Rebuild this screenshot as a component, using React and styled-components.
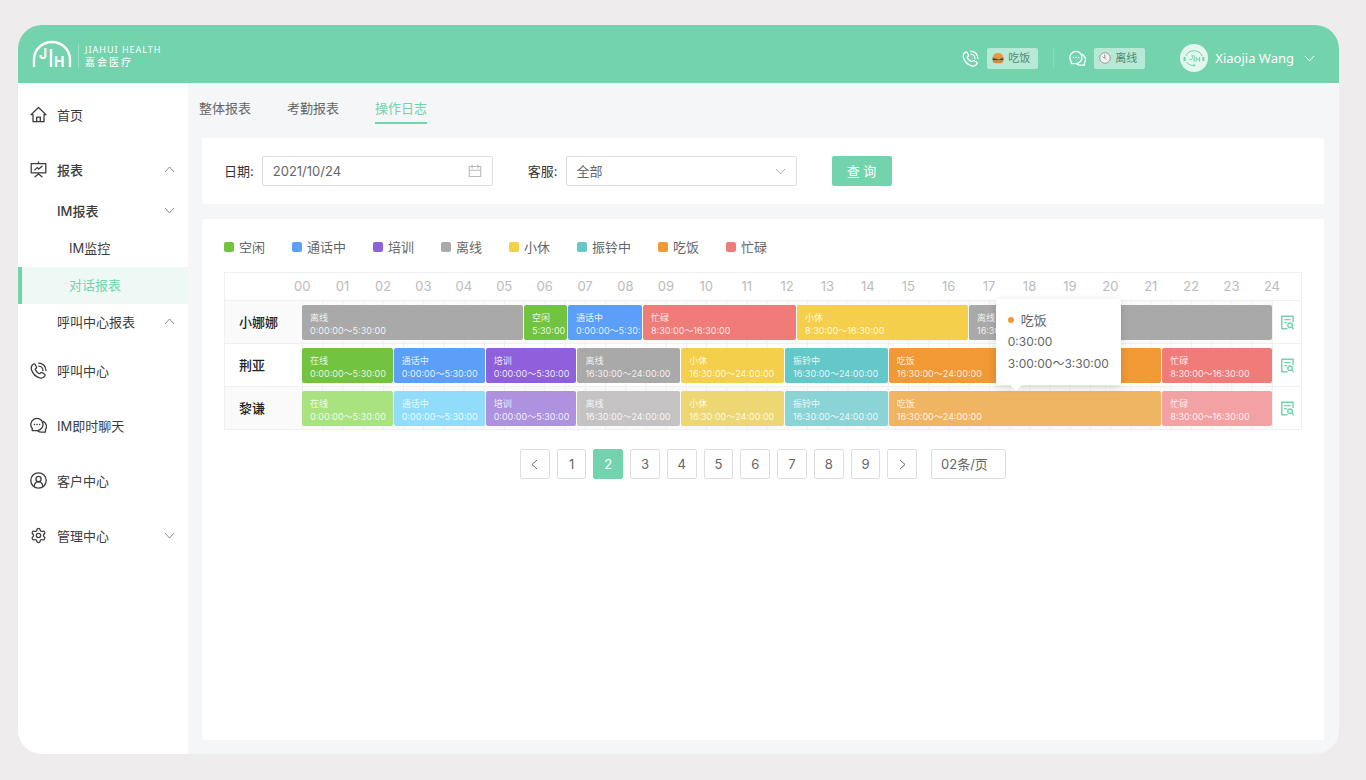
import React, { useState } from 'react'
import styled, { createGlobalStyle } from 'styled-components'
import { Settings } from 'lucide-react'

const GlobalStyle = createGlobalStyle`
    * {
        box-sizing: border-box;
    }
    body {
        margin: 0;
        background: #efeced;
        color: #444;
        font-family: Inter, "Noto Sans CJK SC", sans-serif;
        font-size: 13px;
        line-height: 20px;
    }
    button, input, select {
        font: inherit;
        color: inherit;
    }
    ul {
        list-style: none;
        margin: 0;
        padding: 0;
    }
    a {
        color: inherit;
        text-decoration: none;
    }
`

const COLORS = {
    green: '#72c33f',
    blue: '#5b9ff8',
    purple: '#8f60dc',
    gray: '#a9a9a9',
    yellow: '#f3cf4b',
    teal: '#64c8c9',
    orange: '#f09935',
    red: '#ef7c79',
    greenLight: '#a9e380',
    blueLight: '#90dcfa',
    purpleLight: '#ae92e0',
    grayLight: '#c4c2c3',
    yellowLight: '#edd772',
    tealLight: '#8ad4d5',
    orangeLight: '#f0b562',
    redLight: '#f2a2a2'
}

const Shell = styled.div`
    display: flex;
    flex-direction: column;
    min-height: calc(100vh - 51px);
    margin: 25px 27px 26px 18px;
    border-radius: 24px;
    overflow: hidden;
    background: #f4f6f8;
`

const Header = styled.header`
    display: flex;
    align-items: center;
    height: 58px;
    padding: 8px 24px 0 14px;
    background: #72d3ad;
    color: #fff;
`

const Brand = styled.a`
    display: flex;
    align-items: center;
    margin-right: auto;
    padding-bottom: 4px;
`

const BrandText = styled.span`
    display: flex;
    flex-direction: column;
    margin-left: 6px;
    padding-left: 6px;
    border-left: 1px solid #98dfc4;
    font-family: "Noto Sans", "Noto Sans CJK SC", sans-serif;
    font-size: 9px;
    line-height: 12px;
    letter-spacing: 1px;
`

const BrandChinese = styled.span`
    font-size: 10px;
    letter-spacing: 2px;
`

const Channel = styled.div`
    display: flex;
    align-items: center;
    gap: 8px;
    padding: 0 15px;
    & + & {
        border-left: 1px solid #88dab9;
    }
`

const StatusTag = styled.button`
    display: flex;
    align-items: center;
    gap: 4px;
    height: 21px;
    padding: 0 8px 0 5px;
    border: none;
    border-radius: 2px;
    background: #b8e9d6;
    color: #4f8973;
    font-size: 11px;
    cursor: pointer;
`

const UserMenu = styled.button`
    display: flex;
    align-items: center;
    gap: 7px;
    margin-left: 20px;
    padding: 0;
    border: none;
    background: none;
    color: #fff;
    font-family: "Noto Sans", sans-serif;
    cursor: pointer;
    & > svg:last-child {
        margin-left: 3px;
    }
`

const Body = styled.div`
    display: flex;
    flex: 1;
`

const Sidebar = styled.nav`
    flex: 0 0 170px;
    padding-top: 8px;
    background: #fff;
`

const MenuGroup = styled.li`
    margin-bottom: ${props => (props.$open ? 6 : 8)}px;
`

const MenuLink = styled.a`
    display: flex;
    align-items: center;
    gap: 10px;
    height: 47px;
    padding: 0 13px 0 12px;
    color: #3c3c3c;
    font-weight: ${props => (props.$strong ? 500 : 400)};
`

const SubLink = styled.a`
    display: flex;
    align-items: center;
    height: 37px;
    padding: 0 13px 2px ${props => (props.$deep ? 47 : 35)}px;
    border-left: 4px solid ${props => (props.$active ? '#72d3ad' : 'transparent')};
    background: ${props => (props.$active ? '#eef8f5' : 'none')};
    color: ${props => (props.$active ? '#72d3ad' : '#3c3c3c')};
    font-weight: ${props => (props.$strong ? 500 : 400)};
`

const MenuText = styled.span`
    flex: 1;
`

const Main = styled.main`
    display: flex;
    flex-direction: column;
    flex: 1;
    min-width: 0;
    padding: 0 15px 14px 14px;
`

const Tabs = styled.div`
    display: flex;
    gap: 36px;
    height: 55px;
    padding-top: 12px;
    margin-left: -3px;
`

const Tab = styled.button`
    height: 29px;
    padding: 0 0 2px;
    border: none;
    border-bottom: 2px solid ${props => (props.$active ? '#72d3ad' : 'transparent')};
    background: none;
    color: ${props => (props.$active ? '#72d3ad' : '#666')};
    cursor: pointer;
`

const Card = styled.section`
    padding: 18px 22px;
    border-radius: 2px;
    background: #fff;
`

const LogCard = styled(Card)`
    flex: 1;
    margin-top: 15px;
`

const Filters = styled.form`
    display: flex;
    align-items: center;
    gap: 35px;
`

const FormItem = styled.div`
    display: flex;
    align-items: center;
    gap: 8px;
    & > label {
        color: #333;
    }
`

const Control = styled.div`
    display: flex;
    align-items: center;
    width: 231px;
    height: 30px;
    padding: 0 10px;
    border: 1px solid #dedede;
    border-radius: 2px;
    color: #666;
    input, select {
        flex: 1;
        min-width: 0;
        padding: 0;
        border: none;
        outline: none;
        appearance: none;
        background: none;
    }
`

const SearchButton = styled.button`
    width: 60px;
    height: 30px;
    padding: 0;
    border: none;
    border-radius: 2px;
    background: #72d3ad;
    color: #fff;
    cursor: pointer;
`

const Legend = styled.ul`
    display: flex;
    gap: 27px;
    color: #666;
`

const LegendItem = styled.li`
    display: flex;
    align-items: center;
    gap: 5px;
    &::before {
        content: '';
        width: 10px;
        height: 10px;
        border-radius: 2px;
        background: ${props => props.$color};
    }
`

const LogTable = styled.table`
    width: 100%;
    margin-top: 15px;
    table-layout: fixed;
    border-collapse: separate;
    border-spacing: 0;
    border: 1px solid #f0f0f0;
    th, td {
        padding: 0;
    }
    tbody th, tbody td {
        height: 43px;
        border-top: 1px solid #f0f0f0;
    }
    tbody th {
        padding-left: 14px;
        color: #222;
        font-weight: 500;
        text-align: left;
    }
    tbody tr:nth-child(odd) th, tbody tr:nth-child(odd) td {
        background-color: #fafafa;
    }
    tbody tr td:last-child {
        border-left: 1px solid #f0f0f0;
        background: #fff !important;
    }
`

const NameHead = styled.th`
    width: 77px;
`

const ActionHead = styled.th`
    width: 29px;
`

const Hours = styled.div`
    display: flex;
    height: 27px;
    margin: 0 -20px;
    color: #bbb;
    font-weight: 400;
    line-height: 27px;
    span {
        flex: 1;
        text-align: center;
    }
`

const TrackCell = styled.td`
    background-image: linear-gradient(to right, #efefef 1px, transparent 1px);
    background-size: calc(100% / 48) 100%;
`

const Track = styled.div`
    display: flex;
    gap: 1px;
    height: 35px;
`

const Segment = styled.div`
    position: relative;
    flex: ${props => props.$size} 1 0;
    min-width: 0;
    padding-top: 6px;
    border-radius: 2px;
    background: ${props => props.$color};
    color: #ffffffdd;
    font-size: 9px;
    line-height: 13px;
`

const SegmentLine = styled.span`
    display: block;
    margin-left: 8px;
    overflow: hidden;
    white-space: nowrap;
`

const Tooltip = styled.div`
    position: absolute;
    z-index: 2;
    bottom: calc(100% + 6px);
    left: 107px;
    padding: 10px 12px;
    border-radius: 2px;
    background: #fff;
    box-shadow: 0 2px 8px #00000026;
    color: #666;
    font-size: 12px;
    line-height: 22px;
    white-space: nowrap;
    &::after {
        content: '';
        position: absolute;
        top: 100%;
        left: 14px;
        border: 6px solid transparent;
        border-top-color: #fff;
        border-bottom: none;
    }
`

const TooltipTitle = styled.div`
    display: flex;
    align-items: center;
    gap: 7px;
    font-size: 13px;
    &::before {
        content: '';
        width: 6px;
        height: 6px;
        border-radius: 50%;
        background: #f09935;
    }
`

const DetailButton = styled.button`
    display: flex;
    align-items: center;
    justify-content: center;
    width: 100%;
    padding: 0;
    border: none;
    background: none;
    color: #72d3ad;
    cursor: pointer;
`

const Pager = styled.nav`
    display: flex;
    justify-content: center;
    gap: 14px;
    margin-top: 19px;
    color: #666;
`

const Pages = styled.div`
    display: flex;
    gap: 7px;
    width: 397px;
`

const PageButton = styled.button`
    display: flex;
    align-items: center;
    justify-content: center;
    flex: 1;
    height: 30px;
    padding: 0;
    border: 1px solid ${props => (props.$active ? '#72d3ad' : '#dedede')};
    border-radius: 2px;
    background: ${props => (props.$active ? '#72d3ad' : '#fff')};
    color: ${props => (props.$active ? '#fff' : '#666')};
    cursor: pointer;
`

const PageSize = styled.select`
    width: 75px;
    height: 30px;
    padding: 0 9px;
    border: 1px solid #dedede;
    border-radius: 2px;
    background: #fff;
    appearance: none;
`

const Icon = ({ size = 17, children, ...rest }) => (
    <svg width={size} height={size} viewBox="0 0 17 17" fill="none" stroke="currentColor"
        strokeWidth="1.3" strokeLinecap="round" strokeLinejoin="round" aria-hidden="true" {...rest}>
        {children}
    </svg>
)

const HomeIcon = () => (
    <Icon>
        <path d="M1 8.6 8.5 1.5 16 8.6H14V15.7H3V8.6Z" />
        <path d="M6.7 15.5V11.2H10.3V15.5" />
    </Icon>
)

const BoardIcon = () => (
    <Icon>
        <path d="M8.5 .8V2.6M1.2 2.6H15.8V11.8H1.2ZM8.5 11.8V13M8.5 13 5 15.8M8.5 13 12 15.8" />
        <path d="M4.8 8.9 7.2 6.6 8.8 8 12 5.2" />
    </Icon>
)

const PhoneIcon = () => (
    <Icon>
        <path d="M3.2 2.2C1.2 3.6.8 5.6 1.6 8 2.8 11.6 6 14.8 9.6 15.9 12 16.5 13.8 15.8 14.8 14 15.3 13.2 15 12.5 14.3 12L12.4 10.8C11.6 10.3 10.9 10.5 10.3 11.2 9.8 11.8 9.2 11.8 8.5 11.3 7.2 10.4 6.2 9.3 5.5 8.2 5.1 7.5 5.2 7 5.8 6.5 6.6 6 6.7 5.2 6.3 4.5L5.2 2.7C4.7 1.9 4 1.7 3.2 2.2Z" />
        <path d="M8.6 1.1A7.3 7.3 0 0 1 15.9 8.6M8.8 4.1A4.3 4.3 0 0 1 12.9 8.4" />
    </Icon>
)

const ChatIcon = () => (
    <Icon>
        <path d="M2.2 13.6V11.4A6.1 6.1 0 1 1 7 13.6Z" />
        <path d="M13 4.4A5.4 5.4 0 0 1 15.4 12.7V15.2H11.3A5.5 5.5 0 0 1 7.8 14" />
        <path d="M4.4 7.6H4.5M7 7.6H7.1M9.6 7.6H9.7" strokeWidth="1.5" />
    </Icon>
)

const UserIcon = () => (
    <Icon>
        <circle cx="8.5" cy="8.5" r="7.7" />
        <circle cx="8.5" cy="7" r="2.6" />
        <path d="M4.2 14.6C4.4 11.4 6 9.9 8.5 9.9S12.6 11.4 12.8 14.6" />
    </Icon>
)

const CalendarIcon = () => (
    <Icon size={14} stroke="#bbb" strokeLinejoin="miter">
        <path d="M1.5 3H15.5V15.2H1.5ZM1.5 7.5H15.5M5 1V5M12 1V5" />
    </Icon>
)

const DetailIcon = () => (
    <Icon size={15} strokeLinecap="butt" strokeWidth="1.6">
        <path d="M14.8 8V1.5H2V15.6H8.5M4.8 5.2H12M4.8 8.6H8" />
        <circle cx="11.4" cy="11.6" r="2.6" />
        <path d="M13.2 13.5 15.6 16" />
    </Icon>
)

const Arrow = ({ dir, size = 11, color = 'currentColor' }) => {
    const shapes = {
        up: '1,8 5.5,3 10,8',
        down: '1,3 5.5,8 10,3',
        left: '8,1 3,5.5 8,10',
        right: '3,1 8,5.5 3,10'
    }
    return (
        <svg width={size} height={size} viewBox="0 0 11 11" fill="none" stroke={color} aria-hidden="true">
            <polyline points={shapes[dir]} />
        </svg>
    )
}

const Logo = () => (
    <svg width="40" height="32" viewBox="0 0 40 32" fill="none" stroke="#fff" strokeWidth="2.4" aria-hidden="true">
        <path d="M2 27V19.5A18 17.5 0 0 1 38 19.5V27" />
        <path d="M19 9V27" />
        <text x="7" y="19" fill="#fff" stroke="none" fontFamily="Inter" fontSize="14" fontWeight="700">J</text>
        <text x="22" y="27" fill="#fff" stroke="none" fontFamily="Inter" fontSize="14" fontWeight="700">H</text>
    </svg>
)

const Burger = () => (
    <svg width="12" height="12" viewBox="0 0 12 12" aria-hidden="true">
        <path d="M.8 5.2C.8 2.4 3 .9 6 .9S11.2 2.4 11.2 5.2Z" fill="#e89a3c" />
        <path d="M.4 5.3H11.6V6.5H.4Z" fill="#79a83a" />
        <path d="M.6 6.3H11.4V8.4H.6Z" fill="#6d3524" />
        <path d="M2 6.2H9.5L7 7.4Z" fill="#f5c63c" />
        <path d="M.9 8.4H11.1V9.3C11.1 10.6 10.2 11.2 9 11.2H3C1.8 11.2.9 10.6.9 9.3Z" fill="#dd8a35" />
    </svg>
)

const Clock = () => (
    <svg width="12" height="12" viewBox="0 0 12 12" fill="none" aria-hidden="true">
        <circle cx="6" cy="6" r="5.3" fill="#f6f4f4" stroke="#a09a9c" />
        <path d="M6 6.3 5.6 2.4M6 6.3 3.6 4.8" stroke="#777" strokeWidth=".8" />
        <path d="M6 6.3 8 8.4" stroke="#e0785c" strokeWidth=".5" />
    </svg>
)

const Avatar = () => (
    <svg width="28" height="28" viewBox="0 0 28 28" fill="none" aria-hidden="true">
        <circle cx="14" cy="14" r="14" fill="#e3f7ef" />
        <g stroke="#72d3ad">
            <path d="M6 12C7.2 8.6 10.2 6.7 14 6.7S20.8 8.6 22 12M6.5 18C8 20.2 10 21.2 13 21.4" />
            <path d="M4.6 13V17M23.4 13V17" strokeWidth="2" />
            <path d="M12.3 11V14.6Q11.6 16 9.4 15.4M14.2 11V17.6M16.2 13V17.6M16.2 15.2H19.6M19.6 13V17.6" />
            <path d="M13 21.4H15.2" strokeWidth="1.6" />
        </g>
    </svg>
)

const legend = [
    ['空闲', 'green'], ['通话中', 'blue'], ['培训', 'purple'], ['离线', 'gray'],
    ['小休', 'yellow'], ['振铃中', 'teal'], ['吃饭', 'orange'], ['忙碌', 'red']
]

const early = '0:00:00～5:30:00'
const day = '8:30:00～16:30:00'
const late = '16:30:00～24:00:00'

// [status, time, width share, colour]
const shifts = [
    ['在线', early, 91, 'green'], ['通话中', early, 91, 'blue'], ['培训', early, 91, 'purple'],
    ['离线', late, 103, 'gray'], ['小休', late, 103, 'yellow'], ['振铃中', late, 103, 'teal'],
    ['吃饭', late, 273, 'orange'], ['忙碌', day, 110, 'red']
]

const agents = [
    {
        name: '小娜娜',
        segments: [
            ['离线', early, 221, 'gray'], ['空闲', '5:30:00', 43, 'green'],
            ['通话中', '0:00:00～5:30:', 74, 'blue'], ['忙碌', day, 153, 'red'],
            ['小休', day, 171, 'yellow'], ['离线', late, 303, 'gray']
        ]
    },
    { name: '荆亚', segments: shifts },
    { name: '黎谦', segments: shifts.map(([a, b, c, color]) => [a, b, c, color + 'Light']), tip: 6 }
]

const hours = Array.from({ length: 25 }, (_, i) => String(i).padStart(2, '0'))
const tabs = ['整体报表', '考勤报表', '操作日志']

function Row({ agent }) {
    return (
        <tr>
            <th scope="row">{agent.name}</th>
            <TrackCell>
                <Track>
                    {agent.segments.map(([label, time, size, color], i) => (
                        <Segment key={i} $size={size} $color={COLORS[color]}>
                            <SegmentLine>{label}</SegmentLine>
                            <SegmentLine>{time}</SegmentLine>
                            {agent.tip === i && (
                                <Tooltip role="tooltip">
                                    <TooltipTitle>吃饭</TooltipTitle>
                                    <div>0:30:00</div>
                                    <div>3:00:00～3:30:00</div>
                                </Tooltip>
                            )}
                        </Segment>
                    ))}
                </Track>
            </TrackCell>
            <td><DetailButton type="button" aria-label="详情"><DetailIcon /></DetailButton></td>
        </tr>
    )
}

function App() {
    const [tab, setTab] = useState('操作日志')
    const [page, setPage] = useState(2)
    const [date, setDate] = useState('2021/10/24')

    return (
        <>
            <GlobalStyle />
            <Shell>
                <Header>
                    <Brand href="#">
                        <Logo />
                        <BrandText>
                            <span>JIAHUI HEALTH</span>
                            <BrandChinese>嘉会医疗</BrandChinese>
                        </BrandText>
                    </Brand>
                    <Channel>
                        <PhoneIcon />
                        <StatusTag type="button"><Burger />吃饭</StatusTag>
                    </Channel>
                    <Channel>
                        <ChatIcon />
                        <StatusTag type="button"><Clock />离线</StatusTag>
                    </Channel>
                    <UserMenu type="button">
                        <Avatar />
                        Xiaojia Wang
                        <Arrow dir="down" />
                    </UserMenu>
                </Header>
                <Body>
                    <Sidebar>
                        <ul>
                            <MenuGroup>
                                <MenuLink href="#"><HomeIcon /><MenuText>首页</MenuText></MenuLink>
                            </MenuGroup>
                            <MenuGroup $open>
                                <MenuLink href="#" $strong>
                                    <BoardIcon /><MenuText>报表</MenuText><Arrow dir="up" color="#888" />
                                </MenuLink>
                                <ul>
                                    <li><SubLink href="#" $strong><MenuText>IM报表</MenuText><Arrow dir="down" color="#888" /></SubLink></li>
                                    <li><SubLink href="#" $deep>IM监控</SubLink></li>
                                    <li><SubLink href="#" $deep $active>对话报表</SubLink></li>
                                    <li><SubLink href="#"><MenuText>呼叫中心报表</MenuText><Arrow dir="up" color="#888" /></SubLink></li>
                                </ul>
                            </MenuGroup>
                            <MenuGroup>
                                <MenuLink href="#"><PhoneIcon /><MenuText>呼叫中心</MenuText></MenuLink>
                            </MenuGroup>
                            <MenuGroup>
                                <MenuLink href="#"><ChatIcon /><MenuText>IM即时聊天</MenuText></MenuLink>
                            </MenuGroup>
                            <MenuGroup>
                                <MenuLink href="#"><UserIcon /><MenuText>客户中心</MenuText></MenuLink>
                            </MenuGroup>
                            <MenuGroup>
                                <MenuLink href="#">
                                    <Settings size={17} strokeWidth={1.8} /><MenuText>管理中心</MenuText><Arrow dir="down" color="#888" />
                                </MenuLink>
                            </MenuGroup>
                        </ul>
                    </Sidebar>
                    <Main>
                        <Tabs>
                            {tabs.map(t => (
                                <Tab key={t} type="button" $active={t === tab} onClick={() => setTab(t)}>{t}</Tab>
                            ))}
                        </Tabs>
                        <Card>
                            <Filters onSubmit={e => e.preventDefault()}>
                                <FormItem>
                                    <label htmlFor="date">日期:</label>
                                    <Control>
                                        <input id="date" value={date} onChange={e => setDate(e.target.value)} />
                                        <CalendarIcon />
                                    </Control>
                                </FormItem>
                                <FormItem>
                                    <label htmlFor="agent">客服:</label>
                                    <Control>
                                        <select id="agent"><option>全部</option></select>
                                        <Arrow dir="down" color="#aaa" />
                                    </Control>
                                </FormItem>
                                <SearchButton type="submit">查 询</SearchButton>
                            </Filters>
                        </Card>
                        <LogCard>
                            <Legend>
                                {legend.map(([label, color]) => (
                                    <LegendItem key={label} $color={COLORS[color]}>{label}</LegendItem>
                                ))}
                            </Legend>
                            <LogTable>
                                <thead>
                                    <tr>
                                        <NameHead />
                                        <th><Hours>{hours.map(h => <span key={h}>{h}</span>)}</Hours></th>
                                        <ActionHead />
                                    </tr>
                                </thead>
                                <tbody>
                                    {agents.map(agent => <Row key={agent.name} agent={agent} />)}
                                </tbody>
                            </LogTable>
                            <Pager>
                                <Pages>
                                    <PageButton type="button" aria-label="上一页" onClick={() => setPage(Math.max(1, page - 1))}>
                                        <Arrow dir="left" />
                                    </PageButton>
                                    {[1, 2, 3, 4, 5, 6, 7, 8, 9].map(n => (
                                        <PageButton key={n} type="button" $active={n === page} onClick={() => setPage(n)}>{n}</PageButton>
                                    ))}
                                    <PageButton type="button" aria-label="下一页" onClick={() => setPage(Math.min(9, page + 1))}>
                                        <Arrow dir="right" />
                                    </PageButton>
                                </Pages>
                                <PageSize aria-label="每页条数"><option>02条/页</option></PageSize>
                            </Pager>
                        </LogCard>
                    </Main>
                </Body>
            </Shell>
        </>
    )
}

export default App
